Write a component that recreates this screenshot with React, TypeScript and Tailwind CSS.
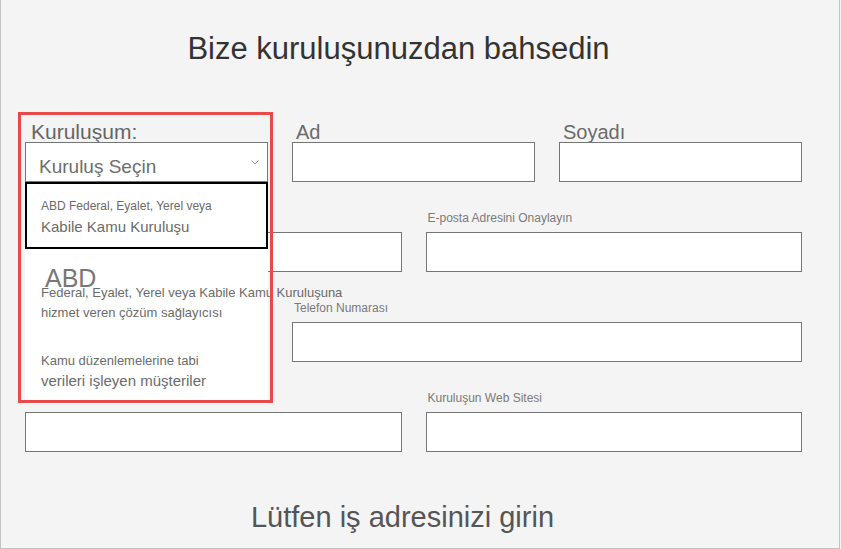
import type { ReactNode } from "react";

function Field({ label, size = "sm", className = "", children }: { label?: string; size?: "lg" | "sm"; className?: string; children?: ReactNode }) {
  return (
    <div className={`flex flex-col ${className}`}>
      <div className="flex h-[50px] items-end">
        {label && size === "lg" && <span className="pl-1 text-[20px] leading-[20px] text-[#6b6b6b]">{label}</span>}
        {label && size === "sm" && <span className="pb-2 pl-[2px] text-[12px] leading-[12px] text-[#7a7a7a]">{label}</span>}
      </div>
      {children ?? <div className="h-10 border border-[#767676] bg-white" />}
    </div>
  );
}

function OrgSelect() {
  return (
    <div className="flex flex-col">
      <div className="flex h-[50px] items-end">
        <span className="pl-[6px] text-[21px] leading-[21px] text-[#666]">Kuruluşum:</span>
      </div>
      <div className="relative h-10 border border-[#767676] bg-white">
        <span className="block pl-[13px] pt-[14px] text-[19px] leading-[19px] text-[#6e6e6e]">Kuruluş Seçin</span>
        <svg className="absolute right-[8px] top-[17px]" width="8" height="5" viewBox="0 0 8 5" fill="none">
          <polyline points="0.5,0.5 4,4 7.5,0.5" stroke="#9a9a9a" strokeWidth="1" />
        </svg>
        <div className="absolute left-[-1px] top-[39px] z-10 w-[243px] bg-white text-[#6b6b6b]">
          <div className="h-[67px] border-2 border-black pl-[14px] pt-[12px]">
            <div className="text-[12px] leading-[20px]">ABD Federal, Eyalet, Yerel veya</div>
            <div className="text-[15px] leading-[22px]">Kabile Kamu Kuruluşu</div>
          </div>
          <div className="pl-4 pt-[25px]">
            <div className="pl-1 text-[25px] leading-[9px] text-[#777]">ABD</div>
            <div className="whitespace-nowrap text-[13px] leading-[20px]">Federal, Eyalet, Yerel veya Kabile Kamu Kuruluşuna</div>
            <div className="text-[13px] leading-[20px]">hizmet veren çözüm sağlayıcısı</div>
          </div>
          <div className="pb-[12px] pl-4 pt-[29px]">
            <div className="text-[13px] leading-[18px]">Kamu düzenlemelerine tabi</div>
            <div className="text-[15px] leading-[22px]">verileri işleyen müşteriler</div>
          </div>
        </div>
      </div>
    </div>
  );
}

export default function App() {
  return (
    <div className="h-[549px] w-[841px] bg-[#f4f4f4]">
      <div className="relative h-[549px] w-[840px] border-x border-b border-[#c2c2c2] bg-[#f4f4f4] font-['Liberation_Sans',Arial,sans-serif]">
        <h1 className="pr-[43px] pt-[31px] text-center text-[31px] leading-[36px] text-[#333]">Bize kuruluşunuzdan bahsedin</h1>

        <div className="ml-6 mt-[25px] w-[777px]">
          <div className="grid grid-cols-3 gap-x-6">
            <OrgSelect />
            <Field label="Ad" size="lg" />
            <Field label="Soyadı" size="lg" />
          </div>
          <div className="grid grid-cols-2 gap-x-6">
            <Field />
            <Field label="E-posta Adresini Onaylayın" />
          </div>
          <div className="grid grid-cols-3 gap-x-6">
            <div />
            <Field label="Telefon Numarası" className="col-span-2" />
          </div>
          <div className="grid grid-cols-2 gap-x-6">
            <Field />
            <Field label="Kuruluşun Web Sitesi" />
          </div>
        </div>

        <h2 className="mt-[48px] pr-[35px] text-center text-[29px] leading-[34px] text-[#555]">Lütfen iş adresinizi girin</h2>

        <div className="pointer-events-none absolute left-[17px] top-[112px] z-20 h-[291px] w-[255px] border-[3px] border-[#e84a4a]" />
      </div>
    </div>
  );
}
